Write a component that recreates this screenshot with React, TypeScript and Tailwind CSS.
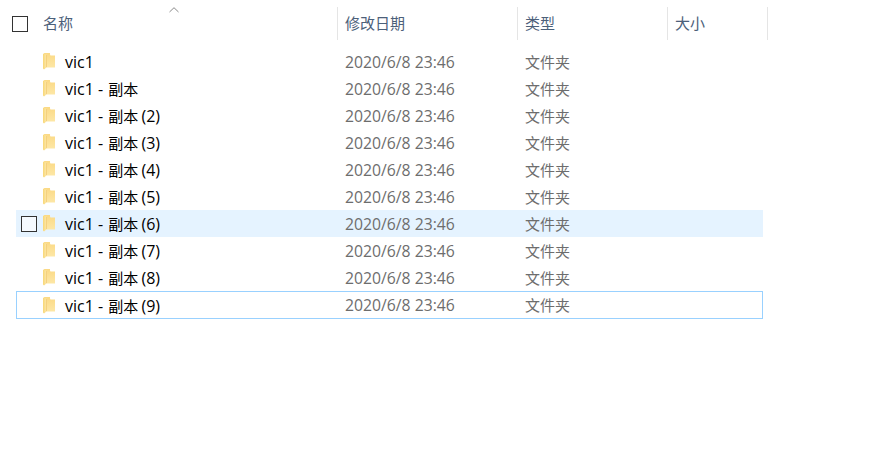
const names = ["", " - 副本", " - 副本 (2)", " - 副本 (3)", " - 副本 (4)", " - 副本 (5)", " - 副本 (6)", " - 副本 (7)", " - 副本 (8)", " - 副本 (9)"];

function FolderIcon() {
  return (
    <svg width="13" height="17" viewBox="0 0 13 17" className="shrink-0">
      <defs>
        <linearGradient id="door" x1="0" y1="0" x2="1" y2="0">
          <stop offset="0" stopColor="#f8d775" />
          <stop offset="1" stopColor="#fdeab5" />
        </linearGradient>
        <linearGradient id="body" x1="0" y1="0" x2="0" y2="1">
          <stop offset="0" stopColor="#fbd984" />
          <stop offset="1" stopColor="#fde7a6" />
        </linearGradient>
      </defs>
      <path d="M1 0h6v1.5l0.5 1H12V14.5H3z" fill="url(#body)" />
      <path d="M0 0.5l4 1.5v12L1 16.5 0 15.5z" fill="url(#door)" />
      <path d="M3.5 2v12" stroke="#eec15f" strokeWidth="0.6" />
    </svg>
  );
}

function Row({ name, index }: { name: string; index: number }) {
  const hovered = index === 6;
  const focused = index === 9;
  const parts = name.match(/^( - )(副本)(.*)$/);
  return (
    <div
      className={
        "flex items-center w-[747px] ml-[16px] " +
        (focused ? "h-[28px] border border-[#99d1ff] pl-[26px]" : "h-[27px] pl-[27px]") +
        (hovered ? " bg-[#e5f3ff] relative" : "")
      }
    >
      {hovered && <div className="absolute left-[5px] top-[6px] w-[16px] h-[16px] border border-[#333] bg-white/60" />}
      <FolderIcon />
      <div className="w-[289px] pl-[9px] pt-[1px] text-[16px] text-black whitespace-pre">
        vic1
        {parts && (
          <>
            {parts[1]}
            <span className="ml-[1px] -mr-[1px] text-[15px]">{parts[2]}</span>
            {parts[3]}
          </>
        )}
      </div>
      <div className="w-[180px] pt-[2px] text-[15.75px] text-[#6d6d6d] whitespace-nowrap">2020/6/8 23:46</div>
      <div className="pt-[1px] text-[15px] text-[#6d6d6d]">文件夹</div>
    </div>
  );
}

export default function App() {
  return (
    <div
      className="relative w-[882px] h-[461px] bg-white overflow-hidden"
      style={{ fontFamily: '"Open Sans", "Noto Sans CJK SC", sans-serif' }}
    >
      <div className="flex h-[33px] mt-[7px] text-[15px] text-[#4c607a]">
        <div className="relative flex items-center w-[338px] border-r border-[#e5e5e5] pl-[12px]">
          <div className="w-[16px] h-[16px] border border-[#333] mr-[15px]" />
          <span>名称</span>
          <svg width="10" height="6" viewBox="0 0 10 6" className="absolute left-[169px] top-[0px]">
            <path d="M0.5 5L5 0.7 9.5 5" fill="none" stroke="#8a8a8a" strokeWidth="1" />
          </svg>
        </div>
        <div className="flex items-center w-[180px] border-r border-[#e5e5e5] pl-[7px]">修改日期</div>
        <div className="flex items-center w-[150px] border-r border-[#e5e5e5] pl-[7px]">类型</div>
        <div className="flex items-center w-[100px] border-r border-[#e5e5e5] pl-[7px]">大小</div>
      </div>
      <div className="mt-[8px]">
        {names.map((n, i) => (
          <Row key={i} name={n} index={i} />
        ))}
      </div>
    </div>
  );
}
